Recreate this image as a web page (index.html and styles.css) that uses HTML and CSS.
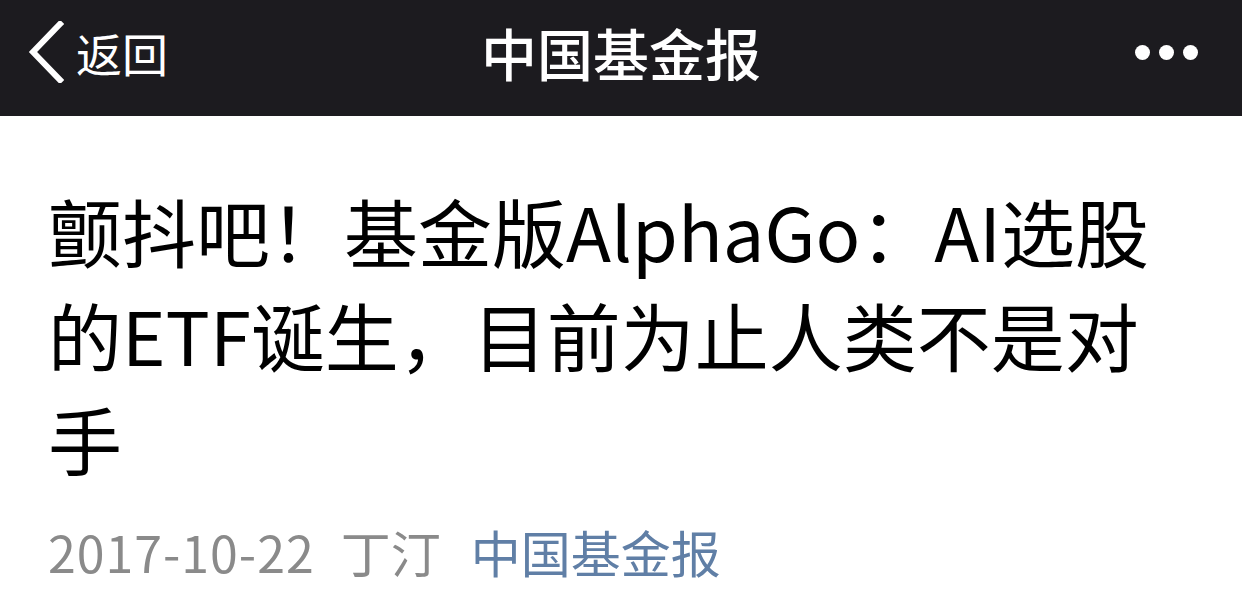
FILE: index.html
```html
<!DOCTYPE html>
<html lang="zh-CN">
<head>
  <meta charset="UTF-8">
  <meta name="viewport" content="width=device-width, initial-scale=1.0">
  <title>中国基金报</title>
  <link rel="stylesheet" href="styles.css">
</head>
<body>
  <header class="nav-bar">
    <div class="nav-left">
      <svg class="back-icon" width="36" height="62" viewBox="0 0 36 62">
        <polyline points="32,3 5,31 32,59" fill="none" stroke="#fff" stroke-width="6" stroke-linecap="square" stroke-linejoin="miter"/>
      </svg>
      <span class="back-text">返回</span>
    </div>
    <h1 class="nav-title">中国基金报</h1>
    <div class="nav-right">
      <span class="dot"></span>
      <span class="dot"></span>
      <span class="dot"></span>
    </div>
  </header>
  <main class="article">
    <h2 class="article-title">颤抖吧！基金版AlphaGo：AI选股的ETF诞生，目前为止人类不是对手</h2>
    <div class="article-meta">
      <span class="meta-date">2017-10-22</span>
      <span class="meta-author">丁汀</span>
      <a class="meta-account" href="#">中国基金报</a>
    </div>
  </main>
</body>
</html>
```

FILE: styles.css
```css
* {
  box-sizing: border-box;
}
html {
  font-family: "Noto Sans CJK SC", "Noto Sans", sans-serif;
}
body {
  margin: 0;
  background: #fff;
}
.nav-bar {
  height: 116px;
  background: #1c1b1f;
  color: #fff;
  display: grid;
  grid-template-columns: 1fr auto 1fr;
  align-items: center;
  padding: 0 44px 12px;
}
.nav-left {
  display: flex;
  align-items: center;
  gap: 12px;
  margin-left: -16px;
}
.back-icon {
  display: block;
}
.back-text {
  font-size: 46px;
  line-height: 1;
}
.nav-title {
  margin: 0;
  font-size: 56px;
  font-weight: 500;
  line-height: 1;
}
.nav-right {
  display: flex;
  justify-content: flex-end;
  gap: 9px;
}
.dot {
  width: 15px;
  height: 15px;
  border-radius: 50%;
  background: #fff;
}
.article {
  padding: 62px 48px 0;
}
.article-title {
  margin: 0;
  font-size: 74px;
  font-weight: 400;
  line-height: 104px;
  color: #000;
}
.article-meta {
  display: flex;
  margin-top: 26px;
  font-size: 50px;
  line-height: 70px;
  color: #8a8a8a;
}
.meta-date {
  letter-spacing: 1px;
  margin-right: 26px;
}
.meta-author {
  margin-right: 30px;
}
.meta-account {
  color: #607fa6;
  text-decoration: none;
}
```
